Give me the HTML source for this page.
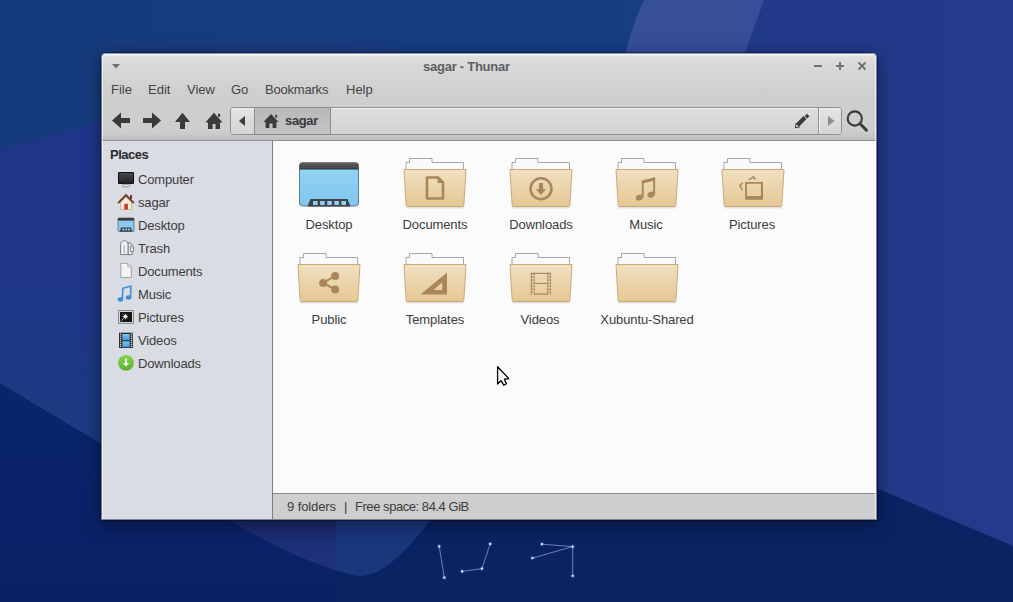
<!DOCTYPE html>
<html><head><meta charset="utf-8">
<style>
*{margin:0;padding:0;box-sizing:border-box}
html,body{width:1013px;height:602px;overflow:hidden;background:#0b2063}
body{position:relative;font-family:"Liberation Sans",sans-serif;color:#3c3c3c;-webkit-font-smoothing:antialiased}
.abs{position:absolute}
#bg{position:absolute;left:0;top:0}
#ov{position:absolute;left:0;top:0}
#win{position:absolute;left:101px;top:53px;width:776px;height:467px;background:#cecece;border-radius:5px 5px 0 0;overflow:hidden;box-shadow:0 0 0 1px rgba(0,0,25,0.35),0 4px 18px rgba(0,0,15,0.5)}
#frame{position:absolute;left:0;top:0;width:776px;height:467px;border:1px solid;border-color:#8d98b4 #7880a6 #7c7e88 #6f7ca4;border-radius:5px 5px 0 0;box-shadow:inset 1px 1px 0 rgba(255,255,255,0.55),inset -1px 0 0 rgba(255,255,255,0.6)}
#title{position:absolute;left:0;top:0;width:776px;height:48px;background:linear-gradient(#f0f0f0 0px,#f0f0f0 2px,#e0e0e0 3px,#d8d8d8 12px,#cfcfcf 40px,#cecece 48px)}
.t{position:absolute;white-space:nowrap;font-size:13px;line-height:16px}
.menu{color:#444}
#tb{position:absolute;left:0;top:48px;width:776px;height:40px;background:linear-gradient(#cecece,#cecece 30px,#bfbfbf 39px);border-bottom:1px solid #8e8e8e}
#side{position:absolute;left:0;top:88px;width:172px;height:379px;background:#d9dde3;border-right:1px solid #7e7e7e}
#main{position:absolute;left:172px;top:88px;width:604px;height:352px;background:#fbfbfb}
#status{position:absolute;left:172px;top:440px;width:604px;height:27px;background:#cecece;border-top:1px solid #8e8e8e}
.lbl{position:absolute;width:106px;text-align:center;font-size:13px;line-height:16px;color:#3c3c3c;letter-spacing:-0.1px}
.si{position:absolute;font-size:13px;line-height:16px;color:#3c3c3c;letter-spacing:-0.15px}
</style></head><body>
<svg id="bg" width="1013" height="602" viewBox="0 0 1013 602">
 <defs>
  <linearGradient id="gUp" x1="0" y1="0" x2="1013" y2="0" gradientUnits="userSpaceOnUse">
   <stop offset="0" stop-color="#163b7c"/>
   <stop offset="0.62" stop-color="#173e83"/>
   <stop offset="0.76" stop-color="#223a89"/>
   <stop offset="1" stop-color="#243a8b"/>
  </linearGradient>
  <linearGradient id="gLo" x1="0" y1="140" x2="0" y2="420" gradientUnits="userSpaceOnUse">
   <stop offset="0" stop-color="#20358a"/>
   <stop offset="0.45" stop-color="#1f3688"/>
   <stop offset="1" stop-color="#1d3a82"/>
  </linearGradient>
  <linearGradient id="gV" x1="0" y1="519" x2="0" y2="575" gradientUnits="userSpaceOnUse">
   <stop offset="0" stop-color="#1b2b6c"/>
   <stop offset="1" stop-color="#1f3380"/>
  </linearGradient>
  <linearGradient id="gDk" x1="0" y1="380" x2="0" y2="602" gradientUnits="userSpaceOnUse"><stop offset="0" stop-color="#0a256c"/><stop offset="1" stop-color="#0a2165"/></linearGradient>
  <clipPath id="cV"><path d="M227,519 L431,519 C412,545 390,567 374,573 Q364,577.5 353,575 C320,567 280,550 227,519 Z"/></clipPath>
 </defs>
 <rect width="1013" height="602" fill="#0a2463"/>
 <rect width="336" height="602" fill="url(#gDk)"/>
 <path d="M0,0 L1013,0 L1013,546 L876,488 L700,420 L600,519 L227,519 L0,383 Z" fill="url(#gUp)"/>
 <path d="M0,150 L60,133 L120,118 L660,300 L600,519 L227,519 L0,383 Z" fill="url(#gLo)"/>
 <g clip-path="url(#cV)">
  <rect x="200" y="500" width="136" height="90" fill="url(#gV)"/>
  <rect x="336" y="500" width="120" height="90" fill="#1a377c"/>
 </g>
 <path d="M644,0 L764,0 L745,53 L625.5,53 C629,38 635,18 644,0 Z" fill="#374e99"/>
 <g stroke="#8fb0e0" stroke-width="0.9" fill="none" opacity="0.75">
  <line x1="439.2" y1="546.3" x2="444.3" y2="577.7"/>
  <polyline points="462.1,571.4 481.9,568.7 490.2,543.9"/>
  <line x1="541.9" y1="544.2" x2="572.7" y2="546.6"/>
  <line x1="532.4" y1="558.1" x2="572.7" y2="546.6"/>
  <line x1="572.7" y1="546.6" x2="572.7" y2="575.8"/>
 </g>
 <g fill="#e6efff" style="filter:drop-shadow(0 0 1.2px #9fc4ff)">
  <circle cx="439.2" cy="546.3" r="1.15"/><circle cx="444.3" cy="577.7" r="1.15"/><circle cx="462.1" cy="571.4" r="1.15"/>
  <circle cx="481.9" cy="568.7" r="1.15"/><circle cx="490.2" cy="543.9" r="1.15"/><circle cx="541.9" cy="544.2" r="1.15"/>
  <circle cx="572.7" cy="546.6" r="1.15"/><circle cx="532.4" cy="558.1" r="1.15"/><circle cx="572.7" cy="575.8" r="1.15"/>
 </g>
</svg>

<div id="win">
 <div id="title"></div>
 <div id="tb"></div>
 <div id="side"></div>
 <div id="main"></div>
 <div id="status"></div>
 <div id="frame"></div>
</div>

<svg id="ov" width="1013" height="602" viewBox="0 0 1013 602">
<defs>
<linearGradient id="fold" x1="0" y1="0" x2="0" y2="1"><stop offset="0" stop-color="#f1e0c2"/><stop offset="0.5" stop-color="#ebd4ac"/><stop offset="1" stop-color="#e4c893"/></linearGradient>
<linearGradient id="dsk" x1="0" y1="0" x2="0" y2="1"><stop offset="0" stop-color="#95d5f4"/><stop offset="1" stop-color="#80c6ec"/></linearGradient>
<linearGradient id="dbar" x1="0" y1="0" x2="0" y2="1"><stop offset="0" stop-color="#808080"/><stop offset="0.2" stop-color="#555"/><stop offset="0.8" stop-color="#4a4a4a"/><stop offset="1" stop-color="#202830"/></linearGradient>
<linearGradient id="scr" x1="0" y1="0" x2="0" y2="1"><stop offset="0" stop-color="#4a4a4a"/><stop offset="1" stop-color="#222"/></linearGradient>
<linearGradient id="vbl" x1="0" y1="0" x2="0" y2="1"><stop offset="0" stop-color="#7cc8f6"/><stop offset="1" stop-color="#3d95e0"/></linearGradient>
<linearGradient id="grn" x1="0" y1="0" x2="0" y2="1"><stop offset="0" stop-color="#86d450"/><stop offset="1" stop-color="#5cb02e"/></linearGradient>
<linearGradient id="btn" x1="0" y1="0" x2="0" y2="1"><stop offset="0" stop-color="#f0f0f0"/><stop offset="0.08" stop-color="#e2e2e2"/><stop offset="1" stop-color="#d4d4d4"/></linearGradient>
<linearGradient id="act" x1="0" y1="0" x2="0" y2="1"><stop offset="0" stop-color="#b9b9b9"/><stop offset="1" stop-color="#c3c3c3"/></linearGradient>
<linearGradient id="ent" x1="0" y1="0" x2="0" y2="1"><stop offset="0" stop-color="#dedede"/><stop offset="1" stop-color="#d2d2d2"/></linearGradient>
</defs>
<path d="M112,64 L120,64 L116,68.5 Z" fill="#6f6f6f"/>
<rect x="814" y="65" width="8" height="2" fill="#727272"/>
<rect x="836" y="65" width="8" height="2" fill="#727272"/><rect x="839" y="62" width="2" height="8" fill="#727272"/>
<path d="M858.5,62.5 L865.5,69.5 M865.5,62.5 L858.5,69.5" stroke="#727272" stroke-width="2"/>
<path d="M112,120.5 L121,112.5 L121,118 L130,118 L130,123 L121,123 L121,128.5 Z" fill="#3a3a3a"/>
<path d="M161,120.5 L152,112.5 L152,118 L143,118 L143,123 L152,123 L152,128.5 Z" fill="#3a3a3a"/>
<path d="M182.5,112.8 L190,122 L185,122 L185,129 L180,129 L180,122 L175,122 Z" fill="#3a3a3a"/>
<path d="M214,112.8 L222.6,122.6 L220,122.6 L220,129 L215.5,129 L215.5,124 L212.6,124 L212.6,129 L208,129 L208,122.6 L205.4,122.6 Z" fill="#3a3a3a"/><rect x="218" y="113.8" width="2.1" height="3" fill="#3a3a3a"/>
<rect x="230.5" y="107.5" width="611" height="27" rx="3" fill="#d6d6d6" stroke="#8f8f8f" stroke-width="1"/>
<path d="M233.5,108 L254,108 L254,134 L233.5,134 Q231,134 231,131.5 L231,110.5 Q231,108 233.5,108 Z" fill="url(#btn)"/>
<rect x="254.5" y="107.5" width="76" height="27" fill="url(#act)" stroke="#8c8c8c" stroke-width="1"/>
<rect x="331" y="108" width="487.5" height="26" fill="url(#ent)"/>
<line x1="331" y1="108.5" x2="818" y2="108.5" stroke="#f2f2f2" stroke-width="1"/>
<path d="M819,108 L838.5,108 Q841,108 841,110.5 L841,131.5 Q841,134 838.5,134 L819,134 Z" fill="url(#btn)"/>
<line x1="818.5" y1="108" x2="818.5" y2="134" stroke="#8f8f8f" stroke-width="1"/><line x1="819.5" y1="109" x2="819.5" y2="133" stroke="#f0f0f0" stroke-width="1"/>
<path d="M245,116 L245,126 L239,121 Z" fill="#3a3a3a"/>
<path d="M271,114 L278.6,122 L276.4,122 L276.4,128 L272.6,128 L272.6,123.6 L269.4,123.6 L269.4,128 L265.6,128 L265.6,122 L263.4,122 Z" fill="#3a3a3a"/><rect x="275.2" y="114.8" width="1.9" height="2.8" fill="#3a3a3a"/>
<path d="M797.4,125.2 L805,117.6" stroke="#3a3a3a" stroke-width="4.3"/><path d="M805.9,114.9 L808.3,117.3" stroke="#3a3a3a" stroke-width="3.2"/><path d="M794.8,128.2 L795.7,122.7 L800.3,127.3 Z" fill="#3a3a3a"/><path d="M796,127 L796.5,124.6 L798.5,126.5 Z" fill="#f2f2f2"/>
<path d="M828,116 L834.5,121 L828,126 Z" fill="#8d8d8d"/>
<circle cx="854.8" cy="118.5" r="7.1" fill="none" stroke="#3a3a3a" stroke-width="2.1"/><path d="M859.8,123.5 L866.5,130.2" stroke="#3a3a3a" stroke-width="3" stroke-linecap="round"/>
<rect x="118" y="172" width="16" height="12" rx="1" fill="#111"/><rect x="119" y="173" width="14" height="10" fill="url(#scr)"/><rect x="122.4" y="184.3" width="7.4" height="2.5" rx="1.2" fill="#f2f2f2" stroke="#6f6f6f" stroke-width="0.8"/>
<path d="M120.5,202 L120.5,209.5 L131.5,209.5 L131.5,202 L126,197 Z" fill="#f1eadb" stroke="#c5b08c" stroke-width="0.8"/><path d="M118.6,202.6 L126,195.2 L133.4,202.6" fill="none" stroke="#6a3a26" stroke-width="1.9" stroke-linecap="round"/><rect x="130" y="195" width="2" height="4" fill="#6a3a26"/><rect x="124.3" y="203.8" width="3.6" height="5.8" fill="#c8372b"/>
<rect x="118" y="218" width="16" height="13.5" rx="1" fill="#8ccbf0" stroke="#4f6a80" stroke-width="0.8"/><rect x="118" y="218" width="16" height="2.6" fill="#3a3a3a"/><path d="M120,231.5 L121,227.5 L131,227.5 L132,231.5 Z" fill="#2d3640"/><rect x="122.3" y="228.6" width="2" height="1.8" fill="#9fd6f5"/><rect x="125.2" y="228.6" width="2" height="1.8" fill="#9fd6f5"/><rect x="128.1" y="228.6" width="2" height="1.8" fill="#9fd6f5"/>
<path d="M128,242.6 Q131.8,242.6 132.2,245.5 L132.2,254.6 L128,254.6 Z" fill="#e6eaee" stroke="#7c7c7c" stroke-width="1"/><rect x="130.4" y="246.2" width="3.2" height="5.4" rx="0.6" fill="#dfe4ea" stroke="#7c7c7c" stroke-width="0.9"/><path d="M120.6,244.2 Q120.6,240.6 124.3,240.6 Q128,240.6 128,244.2 L128,254.6 L120.6,254.6 Z" fill="#eef1f4" stroke="#7c7c7c" stroke-width="1"/><path d="M121.5,243.5 Q122.5,241.5 124.5,241.5 Q126.5,241.5 127,243" fill="none" stroke="#bfe2f8" stroke-width="1.2"/><line x1="124.2" y1="245.5" x2="124.2" y2="253" stroke="#9aa3ad" stroke-width="1"/>
<path d="M120.8,263.3 L128,263.3 L131.3,266.6 L131.3,277.5 L120.8,277.5 Z" fill="#f4f4f4" stroke="#a2a2a2" stroke-width="1"/><path d="M127.8,263.3 L127.8,266.8 L131.3,266.8" fill="#ddd" stroke="#a2a2a2" stroke-width="0.8"/>
<ellipse cx="120.4" cy="299.5" rx="2.8" ry="2.2" fill="#3f8fd8"/><ellipse cx="128.6" cy="297.5" rx="2.8" ry="2.2" fill="#3f8fd8"/><path d="M122.4,299.5 L122.8,288.3 L130.8,286 L130.6,297.5" fill="none" stroke="#3f8fd8" stroke-width="1.6"/>
<rect x="118.5" y="310.5" width="15" height="13" fill="#d8d8d8" stroke="#8a8a8a" stroke-width="1"/><rect x="120" y="312" width="12" height="10" fill="#161616"/><circle cx="125.3" cy="316.6" r="1.7" fill="#f2f2f2"/><path d="M122.6,316.6 L128,316.6 M125.3,313.9 L125.3,319.3 M123.4,314.7 L127.2,318.5 M127.2,314.7 L123.4,318.5" stroke="#e8e8e8" stroke-width="0.9"/><line x1="120.8" y1="321.2" x2="123.8" y2="318.2" stroke="#d0d0d0" stroke-width="0.8"/>
<rect x="119" y="332.7" width="13.8" height="15.3" fill="#222"/><rect x="122.3" y="334" width="7.4" height="6.4" fill="url(#vbl)"/><rect x="122.3" y="341.3" width="7.4" height="6" fill="url(#vbl)"/><rect x="119.9" y="333.50" width="1.3" height="1.2" fill="#e8e8e8"/><rect x="119.9" y="335.55" width="1.3" height="1.2" fill="#e8e8e8"/><rect x="119.9" y="337.60" width="1.3" height="1.2" fill="#e8e8e8"/><rect x="119.9" y="339.65" width="1.3" height="1.2" fill="#e8e8e8"/><rect x="119.9" y="341.70" width="1.3" height="1.2" fill="#e8e8e8"/><rect x="119.9" y="343.75" width="1.3" height="1.2" fill="#e8e8e8"/><rect x="119.9" y="345.80" width="1.3" height="1.2" fill="#e8e8e8"/><rect x="130.7" y="333.50" width="1.3" height="1.2" fill="#e8e8e8"/><rect x="130.7" y="335.55" width="1.3" height="1.2" fill="#e8e8e8"/><rect x="130.7" y="337.60" width="1.3" height="1.2" fill="#e8e8e8"/><rect x="130.7" y="339.65" width="1.3" height="1.2" fill="#e8e8e8"/><rect x="130.7" y="341.70" width="1.3" height="1.2" fill="#e8e8e8"/><rect x="130.7" y="343.75" width="1.3" height="1.2" fill="#e8e8e8"/><rect x="130.7" y="345.80" width="1.3" height="1.2" fill="#e8e8e8"/>
<circle cx="126" cy="362.8" r="7.9" fill="url(#grn)"/><path d="M125.1,358.6 L126.9,358.6 L126.9,363 L129.4,363 L126,366.6 L122.6,363 L125.1,363 Z" fill="#f4f8ee"/>
<g>
<rect x="299.5" y="162.5" width="59" height="43.5" rx="3" fill="url(#dsk)" stroke="#5f7f99" stroke-width="1"/>
<path d="M299.5,169.5 L299.5,165.5 Q299.5,162.5 302.5,162.5 L355.5,162.5 Q358.5,162.5 358.5,165.5 L358.5,169.5 Z" fill="url(#dbar)"/>
<path d="M310.5,199 L347.5,199 L350.5,206.5 L307.5,206.5 Z" fill="#3d4145"/>
<rect x="313.0" y="201" width="4.6" height="4" fill="#8fd0f2"/><rect x="320.1" y="201" width="4.6" height="4" fill="#8fd0f2"/><rect x="327.2" y="201" width="4.6" height="4" fill="#8fd0f2"/><rect x="334.3" y="201" width="4.6" height="4" fill="#8fd0f2"/><rect x="341.4" y="201" width="4.6" height="4" fill="#8fd0f2"/></g>
<rect x="406" y="206.0" width="58" height="2.5" fill="#000" opacity="0.10" rx="1"/>
<path d="M406,170.5 L406,162.5 L409.5,162.5 L409.5,158.5 L432,158.5 L432,162.5 L463.5,162.5 L463.5,170.5 Z" fill="#fafafa" stroke="#a6a6a6" stroke-width="1"/>
<path d="M404,169.5 L466,169.5 L463.8,205.5 Q463.6,206.5 462.6,206.5 L407.4,206.5 Q406.4,206.5 406.2,205.5 Z" fill="url(#fold)" stroke="#caa975" stroke-width="1"/>
<g transform="translate(435,0)"><path d="M-8,177.5 L3,177.5 L8,182.5 L8,198.5 L-8,198.5 Z" fill="none" stroke="#a9875a" stroke-width="2.6" stroke-linejoin="round"/><path d="M2.5,177 L8.5,183 L2.5,183 Z" fill="#a9875a"/></g>
<rect x="512" y="206.0" width="58" height="2.5" fill="#000" opacity="0.10" rx="1"/>
<path d="M512,170.5 L512,162.5 L515.5,162.5 L515.5,158.5 L538,158.5 L538,162.5 L569.5,162.5 L569.5,170.5 Z" fill="#fafafa" stroke="#a6a6a6" stroke-width="1"/>
<path d="M510,169.5 L572,169.5 L569.8,205.5 Q569.6,206.5 568.6,206.5 L513.4,206.5 Q512.4,206.5 512.2,205.5 Z" fill="url(#fold)" stroke="#caa975" stroke-width="1"/>
<g transform="translate(541,0)"><circle cx="0" cy="188.7" r="10.5" fill="none" stroke="#a9875a" stroke-width="2.5"/><path d="M-2.1,183 L2.1,183 L2.1,189.2 L5.2,189.2 L0,195 L-5.2,189.2 L-2.1,189.2 Z" fill="#a9875a"/></g>
<rect x="618" y="206.0" width="58" height="2.5" fill="#000" opacity="0.10" rx="1"/>
<path d="M618,170.5 L618,162.5 L621.5,162.5 L621.5,158.5 L644,158.5 L644,162.5 L675.5,162.5 L675.5,170.5 Z" fill="#fafafa" stroke="#a6a6a6" stroke-width="1"/>
<path d="M616,169.5 L678,169.5 L675.8,205.5 Q675.6,206.5 674.6,206.5 L619.4,206.5 Q618.4,206.5 618.2,205.5 Z" fill="url(#fold)" stroke="#caa975" stroke-width="1"/>
<g transform="translate(647,0)"><ellipse cx="-7.7" cy="197.6" rx="3.7" ry="2.9" transform="rotate(-22 -7.7 197.6)" fill="#a9875a"/><ellipse cx="4.1" cy="194.7" rx="3.7" ry="2.9" transform="rotate(-22 4.1 194.7)" fill="#a9875a"/><rect x="-5.2" y="181" width="1.9" height="16.5" fill="#a9875a"/><rect x="6.2" y="177.5" width="1.9" height="17.5" fill="#a9875a"/><path d="M-5.2,180.6 L8.1,177.2 L8.1,180.6 L-5.2,183.8 Z" fill="#a9875a"/></g>
<rect x="724" y="206.0" width="58" height="2.5" fill="#000" opacity="0.10" rx="1"/>
<path d="M724,170.5 L724,162.5 L727.5,162.5 L727.5,158.5 L750,158.5 L750,162.5 L781.5,162.5 L781.5,170.5 Z" fill="#fafafa" stroke="#a6a6a6" stroke-width="1"/>
<path d="M722,169.5 L784,169.5 L781.8,205.5 Q781.6,206.5 780.6,206.5 L725.4,206.5 Q724.4,206.5 724.2,205.5 Z" fill="url(#fold)" stroke="#caa975" stroke-width="1"/>
<g transform="translate(753,0)"><path d="M-7.9,181.9 L10,181.9 L10,199.7 L-7.9,199.7 Z M-6.1,183.8 L7.9,183.8 L7.9,196.1 L-6.1,196.1 Z" fill="#a9875a" fill-rule="evenodd"/><path d="M-10.2,182 L-14.2,185.2 L-10.4,191.4 L-10.6,188.6 L-12.2,185.4 L-10.2,184 Z" fill="#a9875a"/><path d="M-5.4,180 L0.8,175.8 L3.2,179.6 L1.4,179.6 L0.4,178.2 L-3.6,180 Z" fill="#a9875a"/></g>
<rect x="300" y="301.0" width="58" height="2.5" fill="#000" opacity="0.10" rx="1"/>
<path d="M300,265.5 L300,257.5 L303.5,257.5 L303.5,253.5 L326,253.5 L326,257.5 L357.5,257.5 L357.5,265.5 Z" fill="#fafafa" stroke="#a6a6a6" stroke-width="1"/>
<path d="M298,264.5 L360,264.5 L357.8,300.5 Q357.6,301.5 356.6,301.5 L301.4,301.5 Q300.4,301.5 300.2,300.5 Z" fill="url(#fold)" stroke="#caa975" stroke-width="1"/>
<g transform="translate(329,95)"><circle cx="-5.9" cy="187.9" r="4.0" fill="#a9875a"/><circle cx="6.1" cy="181" r="4.0" fill="#a9875a"/><circle cx="6.1" cy="194.5" r="4.0" fill="#a9875a"/><path d="M-5.9,187.9 L6.1,181 M-5.9,187.9 L6.1,194.5" stroke="#a9875a" stroke-width="2"/></g>
<rect x="406" y="301.0" width="58" height="2.5" fill="#000" opacity="0.10" rx="1"/>
<path d="M406,265.5 L406,257.5 L409.5,257.5 L409.5,253.5 L432,253.5 L432,257.5 L463.5,257.5 L463.5,265.5 Z" fill="#fafafa" stroke="#a6a6a6" stroke-width="1"/>
<path d="M404,264.5 L466,264.5 L463.8,300.5 Q463.6,301.5 462.6,301.5 L407.4,301.5 Q406.4,301.5 406.2,300.5 Z" fill="url(#fold)" stroke="#caa975" stroke-width="1"/>
<g transform="translate(435,95)"><path d="M-14.5,199.5 L12,199.5 L12,177.5 Z M-1.5,195 L7.2,195 L7.2,187.3 Z" fill="#a9875a" fill-rule="evenodd"/></g>
<rect x="512" y="301.0" width="58" height="2.5" fill="#000" opacity="0.10" rx="1"/>
<path d="M512,265.5 L512,257.5 L515.5,257.5 L515.5,253.5 L538,253.5 L538,257.5 L569.5,257.5 L569.5,265.5 Z" fill="#fafafa" stroke="#a6a6a6" stroke-width="1"/>
<path d="M510,264.5 L572,264.5 L569.8,300.5 Q569.6,301.5 568.6,301.5 L513.4,301.5 Q512.4,301.5 512.2,300.5 Z" fill="url(#fold)" stroke="#caa975" stroke-width="1"/>
<g transform="translate(541,95)"><rect x="-10.2" y="177.8" width="3.8" height="21.8" fill="#a9875a"/><rect x="6.3" y="177.8" width="3.7" height="21.8" fill="#a9875a"/><rect x="-10.2" y="177.8" width="20.2" height="1.2" fill="#a9875a"/><rect x="-10.2" y="198.4" width="20.2" height="1.2" fill="#a9875a"/><rect x="-6.4" y="187.9" width="12.7" height="1.1" fill="#a9875a"/><rect x="-9.2" y="179.40" width="2" height="2" fill="#efdcb9"/><rect x="-9.2" y="182.46" width="2" height="2" fill="#efdcb9"/><rect x="-9.2" y="185.52" width="2" height="2" fill="#efdcb9"/><rect x="-9.2" y="188.58" width="2" height="2" fill="#efdcb9"/><rect x="-9.2" y="191.64" width="2" height="2" fill="#efdcb9"/><rect x="-9.2" y="194.70" width="2" height="2" fill="#efdcb9"/><rect x="-9.2" y="197.76" width="2" height="2" fill="#efdcb9"/><rect x="7.2" y="179.40" width="2" height="2" fill="#efdcb9"/><rect x="7.2" y="182.46" width="2" height="2" fill="#efdcb9"/><rect x="7.2" y="185.52" width="2" height="2" fill="#efdcb9"/><rect x="7.2" y="188.58" width="2" height="2" fill="#efdcb9"/><rect x="7.2" y="191.64" width="2" height="2" fill="#efdcb9"/><rect x="7.2" y="194.70" width="2" height="2" fill="#efdcb9"/><rect x="7.2" y="197.76" width="2" height="2" fill="#efdcb9"/></g>
<rect x="618" y="301.0" width="58" height="2.5" fill="#000" opacity="0.10" rx="1"/>
<path d="M618,265.5 L618,257.5 L621.5,257.5 L621.5,253.5 L644,253.5 L644,257.5 L675.5,257.5 L675.5,265.5 Z" fill="#fafafa" stroke="#a6a6a6" stroke-width="1"/>
<path d="M616,264.5 L678,264.5 L675.8,300.5 Q675.6,301.5 674.6,301.5 L619.4,301.5 Q618.4,301.5 618.2,300.5 Z" fill="url(#fold)" stroke="#caa975" stroke-width="1"/>
<g transform="translate(647,95)"></g>
<path d="M497.6,366.8 L497.6,384 L501,380.6 L503.8,385.2 L506.4,383.8 L504.4,379.2 L508.8,378.6 Z" fill="#fafafa" stroke="#000" stroke-width="1.3" stroke-linejoin="round"/>
</svg>
<!-- title/menu text absolute to page -->
<div class="t" style="left:423px;top:59px;font-weight:bold;color:#5e5e5e;letter-spacing:-0.25px">sagar - Thunar</div>
<div class="t menu" style="left:111px;top:82px">File</div>
<div class="t menu" style="left:148px;top:82px">Edit</div>
<div class="t menu" style="left:187px;top:82px">View</div>
<div class="t menu" style="left:231px;top:82px">Go</div>
<div class="t menu" style="left:265px;top:82px;letter-spacing:-0.2px">Bookmarks</div>
<div class="t menu" style="left:346px;top:82px">Help</div>

<!-- sidebar -->
<div class="si" style="left:110px;top:147px;font-weight:bold;letter-spacing:-0.5px;color:#2a2a2a">Places</div>
<div class="si" style="left:138px;top:172px">Computer</div>
<div class="si" style="left:138px;top:195px">sagar</div>
<div class="si" style="left:138px;top:218px">Desktop</div>
<div class="si" style="left:138px;top:241px">Trash</div>
<div class="si" style="left:138px;top:264px">Documents</div>
<div class="si" style="left:138px;top:287px">Music</div>
<div class="si" style="left:138px;top:310px">Pictures</div>
<div class="si" style="left:138px;top:333px">Videos</div>
<div class="si" style="left:138px;top:356px">Downloads</div>

<!-- labels -->
<div class="lbl" style="left:276px;top:217px">Desktop</div>
<div class="lbl" style="left:382px;top:217px">Documents</div>
<div class="lbl" style="left:488px;top:217px">Downloads</div>
<div class="lbl" style="left:593px;top:217px">Music</div>
<div class="lbl" style="left:699px;top:217px">Pictures</div>
<div class="lbl" style="left:276px;top:312px">Public</div>
<div class="lbl" style="left:382px;top:312px">Templates</div>
<div class="lbl" style="left:487px;top:312px">Videos</div>
<div class="lbl" style="left:594px;top:312px">Xubuntu-Shared</div>

<div class="t" style="left:285px;top:113px;font-weight:bold;letter-spacing:-0.35px;color:#383838">sagar</div>
<div class="t" style="left:287px;top:499px;letter-spacing:-0.1px">9 folders</div><div class="t" style="left:344px;top:499px">|</div><div class="t" style="left:355px;top:499px;letter-spacing:-0.45px">Free space: 84.4 GiB</div>
</body></html>
